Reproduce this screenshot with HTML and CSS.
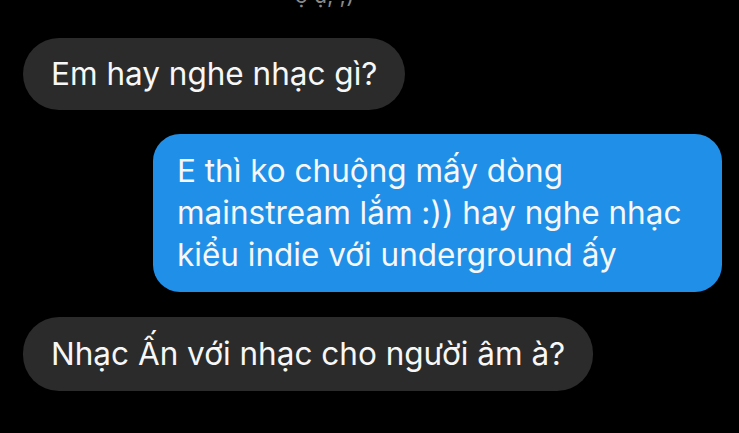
FILE: index.html
```html
<!DOCTYPE html>
<html lang="vi">
<head>
<meta charset="utf-8">
<title>Chat</title>
<link rel="stylesheet" href="styles.css">
</head>
<body>
<div class="thread">
  <div class="cut">ợ ụ, ;)</div>
  <div class="msg in">Em hay nghe nhạc gì?</div>
  <div class="msg out">E thì ko chuộng mấy dòng mainstream lắm :)) hay nghe nhạc kiểu indie với underground ấy</div>
  <div class="msg in">Nhạc Ấn với nhạc cho người âm à?</div>
</div>
</body>
</html>
```
FILE: styles.css
```css
html, body {
  margin: 0;
  padding: 0;
  background: #000;
}
body {
  width: 739px;
  height: 433px;
  overflow: hidden;
  font-family: Inter, "Noto Sans", sans-serif;
}
.thread {
  display: flex;
  flex-direction: column;
  gap: 24px;
  padding: 0 17px 0 23px;
}
.cut {
  align-self: center;
  height: 8px;
  margin-bottom: 6px;
  margin-right: 96px;
  font-size: 22px;
  line-height: 26px;
  color: #8a8a8a;
  overflow: hidden;
  display: flex;
  align-items: flex-end;
}
.msg {
  font-size: 31.5px;
  line-height: 42px;
  color: #f7f7f7;
  padding: 15px 28px;
  box-sizing: border-box;
}
.in {
  align-self: flex-start;
  background: #2b2b2b;
  border-radius: 36px;
}
.out {
  align-self: flex-end;
  width: 569px;
  background: #1f8fe8;
  border-radius: 27px;
  padding: 16px 24px;
}
.out + .in {
  margin-top: 1px;
  padding-top: 16px;
  padding-bottom: 16px;
}
```
